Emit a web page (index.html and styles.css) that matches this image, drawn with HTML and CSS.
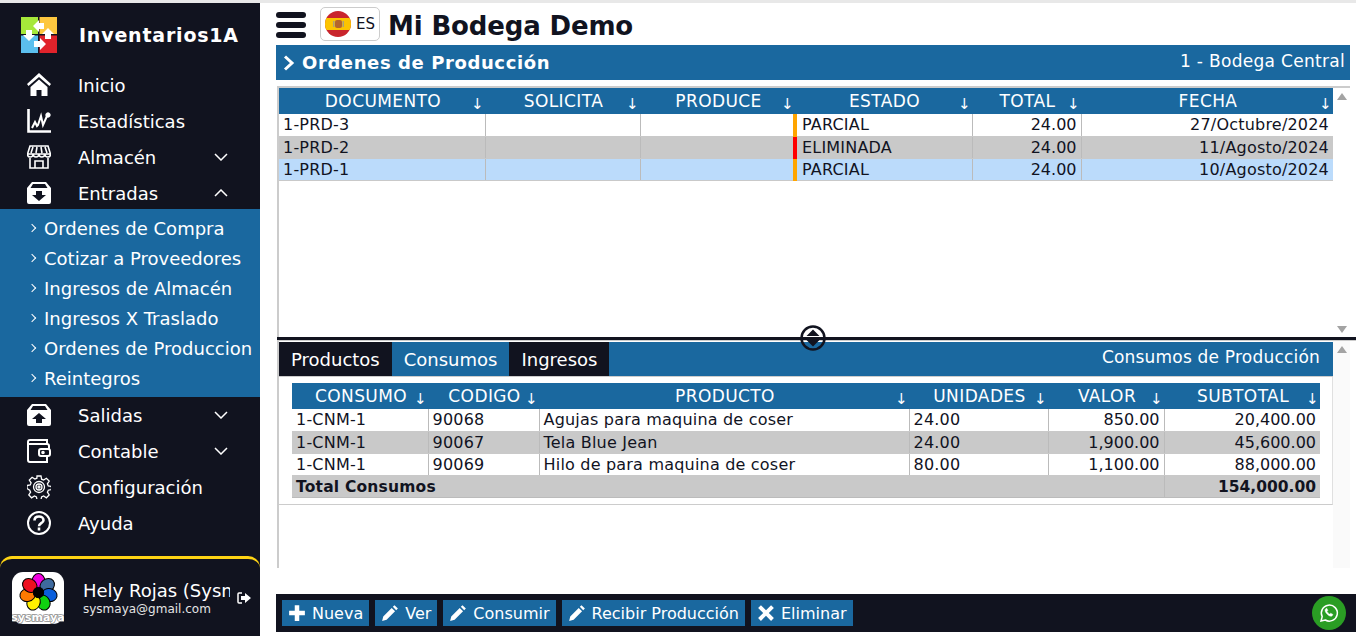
FILE: index.html

```html
<!DOCTYPE html>
<html lang="es">
<head>
  <meta charset="UTF-8">
  <title>Inventarios1A</title>
  <link rel="stylesheet" href="styles.css">
</head>
<body>
  <div class="app">
    <aside class="sidebar">
      <div class="brand">
        <svg class="logo" viewBox="0 0 36 36">
          <rect width="36" height="36" fill="#11131f"/>
          <rect width="17" height="17" fill="#a6e83a"/>
          <rect x="18.500" width="17.500" height="17" fill="#fdc73f"/>
          <rect y="18.500" width="17" height="17.500" fill="#5bbfee"/>
          <rect x="18.500" y="18.500" width="17.500" height="17.500" fill="#e1232b"/>
          <path d="M12 9l6-6v3h5v6h-5v3z" fill="#fff"/>
          <path d="M27 11l6 6h-3v5h-6v-5h-3z" fill="#fff"/>
          <path d="M5 13h6v5h3l-6 6-6-6h3z" fill="#fff"/>
          <path d="M13 24h6v-3l6 6-6 6v-3h-6z" fill="#fff"/>
        </svg>
        <span class="brand-name">Inventarios1A</span>
      </div>
      <nav class="menu">
        <a class="item">
          <svg class="ico" viewBox="0 0 24 24" fill="#fff"><path d="M12 0L0 11l1.500 2L12 4l10.500 9L24 11zM12 6.500L3.500 14v9h6v-6h5v6h6v-9z"/></svg>
          <span>Inicio</span>
        </a>
        <a class="item">
          <svg class="ico" viewBox="0 0 24 24" fill="none" stroke="#fff"><path d="M1.500 0v22.500H24" stroke-width="2.600"/><path d="M5 19l3-6 2 4 1-1 3-9 2 9 4-9" stroke-width="2"/><circle cx="21" cy="6" r="2.200" fill="#fff"/></svg>
          <span>Estadísticas</span>
        </a>
        <a class="item">
          <svg class="ico" viewBox="0 0 24 24" fill="none" stroke="#fff" stroke-width="1.600"><path d="M3 1h18l2.500 8H.5zM.5 9c0 4 5.500 4 5.700 0 0 4 5.500 4 5.800 0 0 4 5.500 4 5.800 0 .2 4 5.700 4 5.700 0M3 13v10h18V13M8 23v-7h8v7M6 2L4 8M10 2L9 8M14 2l1 6M18 2l2 6"/></svg>
          <span>Almacén</span>
          <svg class="chev" viewBox="0 0 14 8" fill="none" stroke="#fff" stroke-width="1.500"><path d="M1 1l6 6 6-6"/></svg>
        </a>
        <a class="item">
          <svg class="ico" viewBox="0 0 24 24"><path d="M5 1h14l5 6v14a2 2 0 0 1-2 2H2a2 2 0 0 1-2-2V7zM6 3L3.500 7h17L18 3z" fill="#fff" fill-rule="evenodd"/><path d="M9 10h6v4h4l-7 6-7-6h4z" fill="#11131f"/></svg>
          <span>Entradas</span>
          <svg class="chev" viewBox="0 0 14 8" fill="none" stroke="#fff" stroke-width="1.500"><path d="M1 7l6-6 6 6"/></svg>
        </a>
        <div class="submenu">
          <a class="subitem">Ordenes de Compra</a>
          <a class="subitem">Cotizar a Proveedores</a>
          <a class="subitem">Ingresos de Almacén</a>
          <a class="subitem">Ingresos X Traslado</a>
          <a class="subitem">Ordenes de Produccion</a>
          <a class="subitem">Reintegros</a>
        </div>
        <a class="item">
          <svg class="ico" viewBox="0 0 24 24"><path d="M5 1h14l5 6v14a2 2 0 0 1-2 2H2a2 2 0 0 1-2-2V7zM6 3L3.500 7h17L18 3z" fill="#fff" fill-rule="evenodd"/><path d="M9 20h6v-4h4l-7-6-7 6h4z" fill="#11131f"/></svg>
          <span>Salidas</span>
          <svg class="chev" viewBox="0 0 14 8" fill="none" stroke="#fff" stroke-width="1.500"><path d="M1 1l6 6 6-6"/></svg>
        </a>
        <a class="item">
          <svg class="ico" viewBox="0 0 24 24" fill="none" stroke="#fff" stroke-width="2"><path d="M20 6V1H3a2 2 0 0 0-2 2v18a2 2 0 0 0 2 2h17v-6M1 5h19a2 2 0 0 1 2 2v3"/><rect x="12" y="10" width="11" height="7" rx="2"/><circle cx="16" cy="13.500" r=".8" fill="#fff"/></svg>
          <span>Contable</span>
          <svg class="chev" viewBox="0 0 14 8" fill="none" stroke="#fff" stroke-width="1.500"><path d="M1 1l6 6 6-6"/></svg>
        </a>
        <a class="item">
          <svg class="ico" viewBox="0 0 24 24" fill="none" stroke="#fff" stroke-width="1.300"><path d="M10 1h4l.6 3.200 2 .9 2.800-1.800 2.800 2.800-1.800 2.800.9 2 3.200.6v3l-3.200.7-.9 2 1.800 2.800-2.800 2.800-2.800-1.800-2 .9-.6 2.800h-4l-.6-2.800-2-.9-2.800 1.800-2.800-2.800 1.800-2.800-.9-2L0 13.500v-3l3.200-.6.900-2-1.800-2.800 2.800-2.800 2.800 1.800 2-.9z"/><circle cx="12" cy="12" r="5.500"/><circle cx="12" cy="12" r="3"/><circle cx="12" cy="12" r="1"/></svg>
          <span>Configuración</span>
        </a>
        <a class="item">
          <svg class="ico" viewBox="0 0 24 24" fill="none" stroke="#fff" stroke-width="2"><circle cx="12" cy="12" r="11"/><path d="M7.500 9.500C7.500 6.500 9.500 5.500 12 5.500s4.500 1.500 4.500 3.700c0 3-4.500 3-4.500 6" stroke-width="2.600"/><path d="M12 16.500v3" stroke-width="2.600"/></svg>
          <span>Ayuda</span>
        </a>
      </nav>
      <div class="user">
        <svg class="avatar" viewBox="0 0 52 52">
          <rect width="52" height="52" rx="11" fill="#fff"/>
          <g stroke="#000" stroke-width="1.200" transform="translate(26.500 20.500) scale(.86)">
            <ellipse cy="-13" rx="7.500" ry="9" fill="#f000e0"/>
            <ellipse cy="-13" rx="7.500" ry="9" fill="#3e6a9e" transform="rotate(51)"/>
            <ellipse cy="-13" rx="7.500" ry="9" fill="#0a5fdc" transform="rotate(103)"/>
            <ellipse cy="-13" rx="7.500" ry="9" fill="#10d010" transform="rotate(154)"/>
            <ellipse cy="-13" rx="7.500" ry="9" fill="#fff200" transform="rotate(206)"/>
            <ellipse cy="-13" rx="7.500" ry="9" fill="#ff7a00" transform="rotate(257)"/>
            <ellipse cy="-13" rx="7.500" ry="9" fill="#ee1020" transform="rotate(309)"/>
            <circle r="6" fill="#000"/>
          </g>
          <text x="26" y="49" class="avatar-text">sysmaya</text>
        </svg>
        <div class="user-info">
          <div class="user-name">Hely Rojas (Sysmaya)</div>
          <div class="user-mail">sysmaya@gmail.com</div>
        </div>
        <svg class="logout" viewBox="0 0 14 12"><path d="M5 1H2a1 1 0 0 0-1 1v8a1 1 0 0 0 1 1h3" fill="none" stroke="#fff" stroke-width="1.500"/><path d="M4 4h4V1l6 5-6 5V8H4z" fill="#fff"/></svg>
      </div>
    </aside>

    <main class="content">
      <header class="topbar">
        <div class="burger"><i></i><i></i><i></i></div>
        <div class="lang">
          <svg class="flag" viewBox="0 0 26 26">
            <clipPath id="round"><circle cx="13" cy="13" r="13"/></clipPath>
            <g clip-path="url(#round)">
              <rect width="26" height="26" fill="#c9252c"/>
              <rect y="7" width="26" height="12" fill="#fcc400"/>
              <rect x="10" y="9" width="7" height="8" rx="2" fill="#b5652b"/>
              <rect x="8" y="10" width="1.500" height="6" fill="#a9a17a"/>
              <rect x="17.500" y="10" width="1.500" height="6" fill="#a9a17a"/>
            </g>
          </svg>
          <span>ES</span>
        </div>
        <h1 class="app-title">Mi Bodega Demo</h1>
      </header>

      <div class="band">
        <h2 class="band-title">
          <svg class="band-chev" viewBox="0 0 12 16" fill="none" stroke="#fff" stroke-width="3"><path d="M2 1.500L9 8l-7 6.500"/></svg>
          Ordenes de Producción
        </h2>
        <span class="band-store">1 - Bodega Central</span>
      </div>

      <section class="pane pane-top">
        <div class="pane-body">
          <table class="grid">
            <colgroup><col class="c1"><col class="c2"><col class="c3"><col class="c4"><col class="c5"><col class="c6"></colgroup>
            <thead>
              <tr>
                <th><div class="th"><span>DOCUMENTO</span><i>↓</i></div></th>
                <th><div class="th"><span>SOLICITA</span><i>↓</i></div></th>
                <th><div class="th"><span>PRODUCE</span><i>↓</i></div></th>
                <th><div class="th"><span>ESTADO</span><i>↓</i></div></th>
                <th><div class="th"><span>TOTAL</span><i>↓</i></div></th>
                <th><div class="th"><span>FECHA</span><i>↓</i></div></th>
              </tr>
            </thead>
            <tbody>
              <tr><td>1-PRD-3</td><td></td><td></td><td class="st st-partial">PARCIAL</td><td class="num">24.00</td><td class="num date">27/Octubre/2024</td></tr>
              <tr class="alt"><td>1-PRD-2</td><td></td><td></td><td class="st st-deleted">ELIMINADA</td><td class="num">24.00</td><td class="num date">11/Agosto/2024</td></tr>
              <tr class="sel"><td>1-PRD-1</td><td></td><td></td><td class="st st-partial">PARCIAL</td><td class="num">24.00</td><td class="num date">10/Agosto/2024</td></tr>
            </tbody>
          </table>
        </div>
        <div class="scrollbar">
          <svg class="arrow" viewBox="0 0 10 7"><path d="M5 0l5 7H0z"/></svg>
          <svg class="arrow" viewBox="0 0 10 7"><path d="M0 0h10L5 7z"/></svg>
        </div>
      </section>

      <div class="splitter">
        <svg class="split-handle" viewBox="0 0 26 26"><circle cx="13" cy="13" r="11.500" fill="none" stroke="#11131f" stroke-width="2.500"/><path d="M13 4.500l6.500 6.500h-13zM13 21.500l6.500-6.500h-13z" fill="#11131f"/></svg>
      </div>

      <section class="pane pane-bottom">
        <div class="pane-body">
          <div class="tabs">
            <a class="tab">Productos</a>
            <a class="tab tab-on">Consumos</a>
            <a class="tab">Ingresos</a>
            <span class="tabs-title">Consumos de Producción</span>
          </div>
          <div class="tab-body">
            <table class="grid">
              <colgroup><col class="d1"><col class="d2"><col class="d3"><col class="d4"><col class="d5"><col class="d6"></colgroup>
              <thead>
                <tr>
                  <th><div class="th"><span>CONSUMO</span><i>↓</i></div></th>
                  <th><div class="th"><span>CODIGO</span><i>↓</i></div></th>
                  <th><div class="th"><span>PRODUCTO</span><i>↓</i></div></th>
                  <th><div class="th"><span>UNIDADES</span><i>↓</i></div></th>
                  <th><div class="th"><span>VALOR</span><i>↓</i></div></th>
                  <th><div class="th"><span>SUBTOTAL</span><i>↓</i></div></th>
                </tr>
              </thead>
              <tbody>
                <tr><td>1-CNM-1</td><td>90068</td><td>Agujas para maquina de coser</td><td>24.00</td><td class="num">850.00</td><td class="num">20,400.00</td></tr>
                <tr class="alt"><td>1-CNM-1</td><td>90067</td><td>Tela Blue Jean</td><td>24.00</td><td class="num">1,900.00</td><td class="num">45,600.00</td></tr>
                <tr><td>1-CNM-1</td><td>90069</td><td>Hilo de para maquina de coser</td><td>80.00</td><td class="num">1,100.00</td><td class="num">88,000.00</td></tr>
                <tr class="alt total"><td colspan="5">Total Consumos</td><td class="num">154,000.00</td></tr>
              </tbody>
            </table>
          </div>
        </div>
        <div class="scrollbar scrollbar-soft">
          <svg class="arrow" viewBox="0 0 10 7"><path d="M5 0l5 7H0z"/></svg>
        </div>
      </section>

      <footer class="actions">
        <a class="btn"><svg viewBox="0 0 16 16" fill="#fff"><path d="M6 1h4v5h5v4h-5v5H6v-5H1V6h5z"/></svg>Nueva</a>
        <a class="btn"><svg viewBox="0 0 16 16" fill="#fff"><path d="M12 1l3 3-1.500 1.500-3-3zM9.500 3.500l3 3L5 14l-4 1 1-4z"/></svg>Ver</a>
        <a class="btn"><svg viewBox="0 0 16 16" fill="#fff"><path d="M12 1l3 3-1.500 1.500-3-3zM9.500 3.500l3 3L5 14l-4 1 1-4z"/></svg>Consumir</a>
        <a class="btn"><svg viewBox="0 0 16 16" fill="#fff"><path d="M12 1l3 3-1.500 1.500-3-3zM9.500 3.500l3 3L5 14l-4 1 1-4z"/></svg>Recibir Producción</a>
        <a class="btn"><svg viewBox="0 0 16 16" fill="#fff"><path d="M3.500 1L8 5.500 12.500 1 15 3.500 10.500 8l4.500 4.500-2.500 2.500L8 10.500 3.500 15 1 12.500 5.500 8 1 3.500z"/></svg>Eliminar</a>
        <a class="wa">
          <svg viewBox="0 0 20 20" fill="none" stroke="#fff"><path d="M2 18l1.200-4.300A8 8 0 1 1 6.300 17z" stroke-width="1.500"/><path d="M7 5.500c-1.500 1-1.200 3 .5 5s4 3.500 5.500 2.500l1-1.500-2.300-1.300-1 .9c-1-.4-2.200-1.600-2.700-2.700l.9-1L7.800 5.300z" fill="#fff" stroke-width=".4"/></svg>
        </a>
      </footer>
    </main>
  </div>
</body>
</html>
```

FILE: styles.css

```css
html, body {
  margin: 0;
  padding: 0;
  height: 100%;
  overflow: hidden;
  background: #fff;
}
body {
  font-family: "DejaVu Sans", Verdana, sans-serif;
  font-size: 16px;
  color: #11131f;
}
.app {
  display: flex;
  height: 633px;
  border-top: 3px solid #e8e8e8;
}

/* sidebar */
.sidebar {
  width: 260px;
  flex: none;
  display: flex;
  flex-direction: column;
  background: #11131f;
  color: #fff;
}
.brand {
  height: 64px;
  display: flex;
  align-items: center;
  padding-left: 21px;
  gap: 22px;
  box-sizing: border-box;
}
.logo {
  width: 36px;
  height: 36px;
}
.brand-name {
  font-size: 19px;
  font-weight: bold;
  letter-spacing: .8px;
}
.item {
  height: 36px;
  display: flex;
  align-items: center;
  padding: 0 32px 0 27px;
  font-size: 18px;
}
.ico {
  width: 24px;
  height: 24px;
  flex: none;
  margin-right: 27px;
}
.chev {
  width: 14px;
  height: 8px;
  margin-left: auto;
}
.submenu {
  position: relative;
  margin-top: -2px;
  background: #1a689f;
  padding: 4px 0;
}
.subitem {
  display: flex;
  align-items: center;
  height: 30px;
  padding-left: 30px;
  font-size: 18px;
  white-space: nowrap;
}
.subitem::before {
  content: "";
  width: 5px;
  height: 5px;
  margin-right: 9px;
  margin-left: -1px;
  border-top: 1px solid #fff;
  border-right: 1px solid #fff;
  transform: rotate(45deg);
}
.user {
  margin-top: auto;
  height: 77px;
  display: flex;
  align-items: center;
  padding-left: 12px;
  border-top: 3px solid #ffd414;
  border-radius: 12px 12px 0 0;
}
.avatar {
  width: 52px;
  height: 52px;
  flex: none;
}
.avatar-text {
  font-size: 11px;
  font-weight: bold;
  fill: #fff;
  stroke: #8a8a8a;
  stroke-width: 1.500px;
  paint-order: stroke;
  text-anchor: middle;
}
.user-info {
  width: 147px;
  margin-left: 19px;
  overflow: hidden;
  white-space: nowrap;
}
.user-name {
  font-size: 18px;
  line-height: 22px;
}
.user-mail {
  font-size: 12px;
  line-height: 14px;
  color: #e4e4e4;
}
.logout {
  width: 14px;
  height: 12px;
  margin-left: 7px;
}

/* main column */
.content {
  flex: 1;
  min-width: 0;
  display: flex;
  flex-direction: column;
  padding-left: 16px;
}
.topbar {
  height: 42px;
  display: flex;
  align-items: center;
  flex: none;
}
.burger {
  width: 30px;
  display: flex;
  flex-direction: column;
  gap: 4px;
  margin: 2px 14px 0 0;
}
.burger i {
  height: 6px;
  border-radius: 3px;
  background: #11131f;
}
.lang {
  width: 60px;
  height: 34px;
  display: flex;
  align-items: center;
  gap: 5px;
  padding-left: 4px;
  box-sizing: border-box;
  border: 1px solid #ccc;
  border-radius: 5px;
  font-size: 15px;
  margin-right: 8px;
}
.flag {
  width: 26px;
  height: 26px;
}
.app-title {
  margin: 4px 0 0;
  font-size: 26px;
  font-weight: bold;
  letter-spacing: -.15px;
}
.band {
  height: 35px;
  margin-right: 6px;
  flex: none;
  display: flex;
  align-items: center;
  justify-content: space-between;
  padding: 0 5px 0 7px;
  background: #1a689f;
  color: #fff;
}
.band-title {
  margin: 0;
  display: flex;
  align-items: center;
  gap: 7px;
  font-size: 18px;
  letter-spacing: .6px;
}
.band-chev {
  width: 12px;
  height: 16px;
}
.band-store {
  font-size: 17px;
  letter-spacing: .3px;
  margin-top: -4px;
}

/* split panes */
.pane {
  display: flex;
  margin: 0 6px 0 1px;
  border-left: 2px solid #ccc;
  flex: none;
}
.pane-top {
  height: 249px;
  margin-top: 6px;
  border-top: 2px solid #ccc;
}
.pane-bottom {
  height: 227px;
}
.pane-body {
  flex: 1;
  min-width: 0;
}
.scrollbar {
  width: 17px;
  flex: none;
  display: flex;
  flex-direction: column;
  justify-content: space-between;
  align-items: center;
  padding: 5px 0 4px;
  box-sizing: border-box;
}
.scrollbar-soft {
  background: #fafafa;
  justify-content: flex-start;
}
.arrow {
  display: block;
  width: 10px;
  height: 7px;
  fill: #a3a3a3;
}
.splitter {
  height: 4px;
  margin: 0 0 0 1px;
  flex: none;
  box-sizing: border-box;
  border-top: 3px solid #11131f;
  border-bottom: 1px solid #ccc;
  position: relative;
}
.split-handle {
  position: absolute;
  left: 523px;
  top: -15px;
  width: 26px;
  height: 26px;
}

/* tables */
.grid {
  width: 100%;
  table-layout: fixed;
  border-collapse: collapse;
}
.grid th {
  height: 26px;
  padding: 0 1px 0 3px;
  background: #1a689f;
  color: #fff;
  font-weight: normal;
  font-size: 17px;
  letter-spacing: .4px;
}
.grid td {
  height: 22px;
  padding: 1px 4px 0;
  box-sizing: border-box;
  font-size: 16px;
  line-height: 20px;
  letter-spacing: .2px;
  border-left: 1px solid #bbb;
  border-bottom: 1px solid #c9c9c9;
  white-space: nowrap;
  overflow: hidden;
  background: #fff;
}
.grid td:first-child {
  border-left: 0;
}
.grid .alt td {
  background: #c9c9c9;
  border-bottom-color: #c9c9c9;
}
.grid .sel td {
  background: #bbdbfb;
}
.grid .num {
  text-align: right;
  letter-spacing: 0;
}
.grid .date {
  letter-spacing: .2px;
}
.grid .st {
  padding-left: 5px;
  border-left-width: 4px;
  border-left-style: solid;
}
.grid .st-partial {
  border-left-color: #ffa500;
}
.grid .st-deleted {
  border-left-color: #f00;
}
.grid .total td {
  font-weight: bold;
  font-size: 15.500px;
  border-bottom: 1px solid #bbb;
}
.th {
  display: grid;
  grid-template-columns: 1fr auto 1fr;
  align-items: center;
}
.th span {
  grid-column: 2;
  white-space: nowrap;
}
.th i {
  grid-column: 3;
  justify-self: end;
  font-style: normal;
  font-size: 15px;
  margin-top: 6px;
}
.c1 { width: 206px; }
.c2 { width: 155px; }
.c3 { width: 155px; }
.c4 { width: 177px; }
.c5 { width: 109px; }
.c6 { width: 252px; }
.d1 { width: 136px; }
.d2 { width: 111px; }
.d3 { width: 370px; }
.d4 { width: 139px; }
.d5 { width: 116px; }
.d6 { width: 156px; }

/* tabs */
.tabs {
  height: 34px;
  margin-top: 1px;
  display: flex;
  align-items: stretch;
  background: #1a689f;
  color: #fff;
  border-bottom: 1px solid #ccc;
}
.tab {
  display: flex;
  align-items: center;
  padding: 0 12px;
  font-size: 18px;
  background: #11131f;
}
.tab-on {
  background: #1a689f;
}
.tabs-title {
  margin-left: auto;
  padding-right: 13px;
  font-size: 17px;
  letter-spacing: .2px;
  line-height: 30px;
}
.tab-body {
  padding: 6px 13px;
  border-bottom: 1px solid #ccc;
  border-right: 1px solid #e0e0e0;
}

/* footer */
.actions {
  height: 38px;
  margin-top: 26px;
  flex: none;
  display: flex;
  align-items: center;
  gap: 6px;
  padding-left: 6px;
  background: #11131f;
}
.btn {
  height: 26px;
  display: flex;
  align-items: center;
  gap: 6px;
  padding: 0 6px;
  background: #1a689f;
  color: #fff;
  font-size: 16px;
}
.btn svg {
  width: 18px;
  height: 18px;
}
.wa {
  margin-left: auto;
  margin-right: 10px;
  width: 34px;
  height: 34px;
  display: flex;
  align-items: center;
  justify-content: center;
  border-radius: 50%;
  background: #2a9d24;
}
.wa svg {
  width: 20px;
  height: 20px;
}
```
